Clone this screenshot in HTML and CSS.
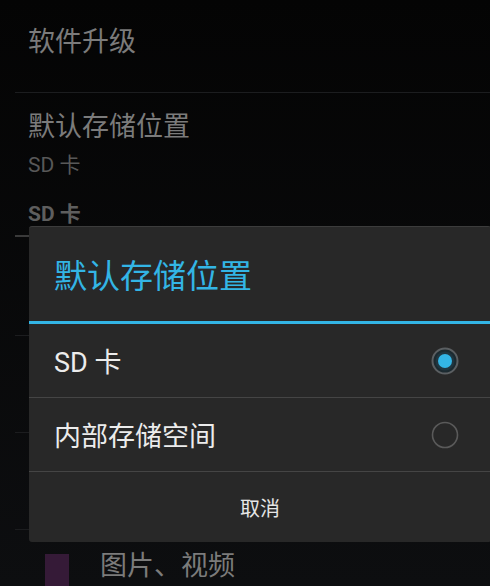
FILE: index.html
```html
<!DOCTYPE html>
<html lang="zh-CN">
<head>
    <meta charset="UTF-8">
    <meta name="viewport" content="width=device-width, initial-scale=1.0">
    <title>设置</title>
    <link rel="stylesheet" href="styles.css">
</head>
<body>
    <!-- Liste des réglages en arrière-plan -->
    <div class="prefs">
        <div class="pref pref-first">
            <div class="pref-title">软件升级</div>
        </div>
        <div class="pref pref-storage">
            <div class="pref-title">默认存储位置</div>
            <div class="pref-summary">SD 卡</div>
        </div>
        <div class="pref-category">SD 卡</div>
        <div class="pref pref-empty pref-gap"></div>
        <div class="pref pref-empty"></div>
        <div class="pref pref-empty"></div>
        <div class="pref pref-media">
            <span class="media-icon"></span>
            <span class="pref-title">图片、视频</span>
        </div>
    </div>

    <!-- Dialogue -->
    <div class="dialog">
        <div class="dialog-title">默认存储位置</div>
        <div class="dialog-list">
            <div class="choice">
                <span class="choice-text">SD 卡</span>
                <svg class="radio" width="28" height="28" viewBox="0 0 28 28">
                    <circle cx="14" cy="14" r="12.5" fill="#1c2a30" stroke="#5b5f62" stroke-width="2"/>
                    <circle cx="14" cy="14" r="9.5" fill="#203640"/>
                    <circle cx="14" cy="14" r="7" fill="#33b5e5"/>
                </svg>
            </div>
            <div class="choice">
                <span class="choice-text">内部存储空间</span>
                <svg class="radio" width="28" height="28" viewBox="0 0 28 28">
                    <circle cx="14" cy="14" r="12.5" fill="none" stroke="#5a5a5a" stroke-width="1.6"/>
                </svg>
            </div>
        </div>
        <div class="dialog-btn">取消</div>
    </div>
</body>
</html>
```

FILE: styles.css
```css
body {
    margin: 0;
    width: 490px;
    height: 586px;
    overflow: hidden;
    position: relative;
    background: linear-gradient(#040404, #0d0e10);
    font-family: Roboto, "Noto Sans CJK SC", sans-serif;
}

.prefs {
    padding-left: 15px;
}

.pref {
    border-bottom: 1px solid #1c1d1f;
    box-sizing: border-box;
}

.pref-title {
    font-size: 27px;
    line-height: 27px;
    color: #7b7b7b;
}

.pref-first {
    height: 93px;
    padding: 29px 0 0 13px;
}

.pref-storage {
    border-bottom: none;
    height: 90px;
    padding: 21px 0 0 13px;
}

.pref-summary {
    font-size: 21px;
    line-height: 21px;
    margin-top: 14px;
    color: #585858;
}

.pref-category {
    height: 54px;
    box-sizing: border-box;
    padding: 21px 0 0 13px;
    font-size: 21px;
    line-height: 21px;
    font-weight: bold;
    color: #5e5e5e;
    border-bottom: 2px solid #3a3a3a;
}

.pref-empty {
    height: 97px;
}

.pref-gap {
    height: 99px;
}

.pref-media {
    border-bottom: none;
    display: flex;
    align-items: flex-start;
    padding-top: 23px;
}

.media-icon {
    width: 24px;
    height: 40px;
    margin-left: 30px;
    margin-top: 1px;
    background: #351a37;
}

.media-icon + .pref-title {
    margin-left: 31px;
}

/* Dialogue */
.dialog {
    position: absolute;
    left: 29px;
    top: 226px;
    width: 462px;
    background: #282828;
    border-top: 1px solid #3c3c3c;
    border-radius: 3px;
    box-sizing: border-box;
}

.dialog-title {
    height: 97px;
    box-sizing: border-box;
    padding: 33px 0 0 25px;
    font-size: 33px;
    line-height: 33px;
    color: #33b5e5;
    border-bottom: 3px solid #33b5e5;
}

.choice {
    height: 73px;
    display: flex;
    align-items: center;
    justify-content: space-between;
    padding: 0 32px 0 25px;
    border-bottom: 1px solid #454545;
}

.choice-text {
    font-size: 27px;
    color: #ececec;
}

.radio {
    display: block;
}

.dialog-btn {
    height: 70px;
    display: flex;
    align-items: center;
    justify-content: center;
    font-size: 20px;
    color: #e6e6e6;
}
```
